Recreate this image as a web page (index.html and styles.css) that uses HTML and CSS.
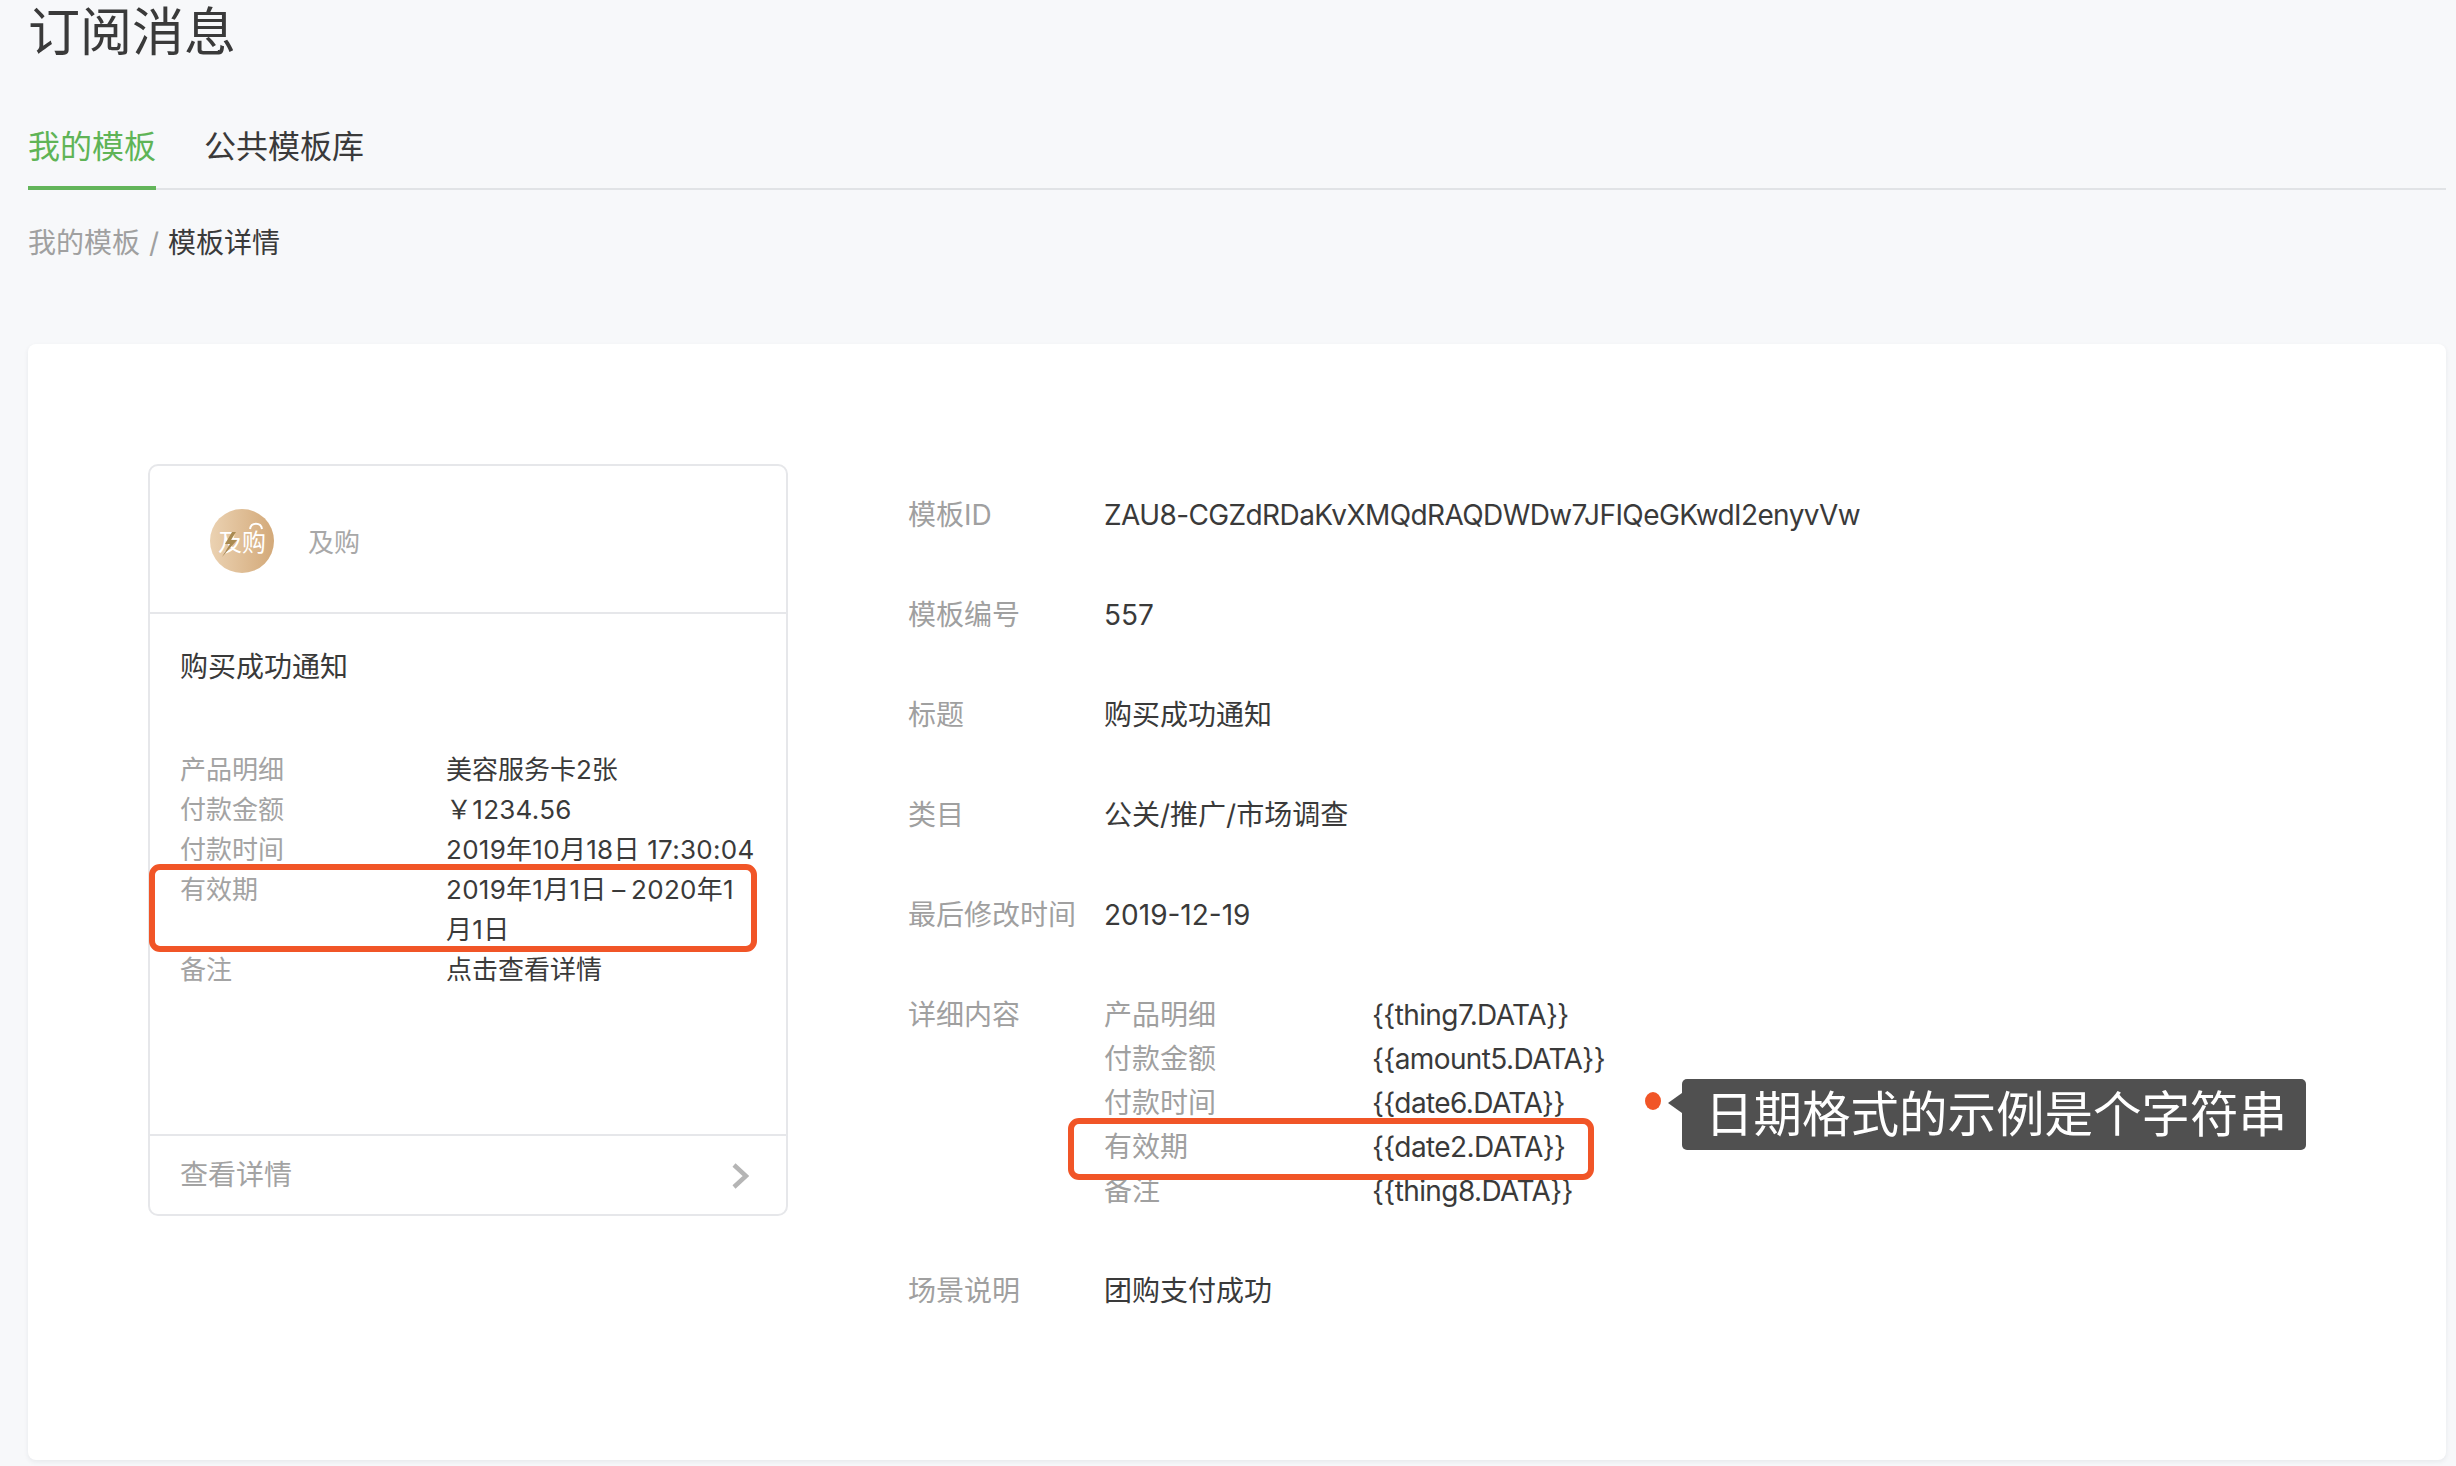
FILE: index.html
```html
<!DOCTYPE html>
<html lang="zh-CN">
<head>
<meta charset="utf-8">
<title>订阅消息</title>
<link rel="stylesheet" href="styles.css">
</head>
<body>
<div class="page">
  <h1 class="title">订阅消息</h1>
  <nav class="tabs">
    <a class="tab tab-active">我的模板</a>
    <a class="tab">公共模板库</a>
  </nav>
  <div class="crumbs"><span class="crumb-link">我的模板</span><span class="crumb-sep">/</span><span class="crumb-current">模板详情</span></div>
  <main class="panel">
    <section class="phone">
      <header class="phone-head">
        <div class="logo">
          <span class="logo-text">及购</span>
          <svg class="logo-art" viewBox="0 0 64 64">
            <path class="logo-handle" d="M40 20c1-7 11-7 12 0"/>
            <path class="logo-bolt" d="M22 23 15 35h5l-8 13L27 31h-6l5-8z"/>
          </svg>
        </div>
        <span class="brand">及购</span>
      </header>
      <div class="phone-body">
        <div class="phone-title">购买成功通知</div>
        <dl class="phone-list">
          <div class="phone-row"><dt>产品明细</dt><dd>美容服务卡2张</dd></div>
          <div class="phone-row"><dt>付款金额</dt><dd class="digits">￥1234.56</dd></div>
          <div class="phone-row"><dt>付款时间</dt><dd class="digits">2019年10月18日 17:30:04</dd></div>
          <div class="phone-row"><dt>有效期</dt><dd class="digits range">2019年1月1日 – 2020年1月1日</dd></div>
          <div class="phone-row"><dt>备注</dt><dd>点击查看详情</dd></div>
        </dl>
        <div class="mark mark-phone"></div>
      </div>
      <footer class="phone-foot">
        <span>查看详情</span>
        <svg class="chevron" viewBox="0 0 18 26"><path d="M3 2l12 11L3 24"/></svg>
      </footer>
    </section>
    <section class="info">
      <div class="info-row"><div class="info-label">模板ID</div><div class="info-value latin">ZAU8-CGZdRDaKvXMQdRAQDWDw7JFIQeGKwdI2enyvVw</div></div>
      <div class="info-row"><div class="info-label">模板编号</div><div class="info-value">557</div></div>
      <div class="info-row"><div class="info-label">标题</div><div class="info-value">购买成功通知</div></div>
      <div class="info-row"><div class="info-label">类目</div><div class="info-value">公关/推广/市场调查</div></div>
      <div class="info-row"><div class="info-label">最后修改时间</div><div class="info-value">2019-12-19</div></div>
      <div class="info-row">
        <div class="info-label">详细内容</div>
        <div class="detail">
          <div class="detail-row"><span class="detail-key">产品明细</span><span class="latin">{{thing7.DATA}}</span></div>
          <div class="detail-row"><span class="detail-key">付款金额</span><span class="latin">{{amount5.DATA}}</span></div>
          <div class="detail-row"><span class="detail-key">付款时间</span><span class="latin">{{date6.DATA}}</span></div>
          <div class="detail-row"><span class="detail-key">有效期</span><span class="latin">{{date2.DATA}}</span></div>
          <div class="detail-row"><span class="detail-key">备注</span><span class="latin">{{thing8.DATA}}</span></div>
          <div class="mark mark-detail"></div>
          <div class="note">
            <span class="note-dot"></span>
            <span class="note-box">日期格式的示例是个字符串</span>
          </div>
        </div>
      </div>
      <div class="info-row"><div class="info-label">场景说明</div><div class="info-value">团购支付成功</div></div>
    </section>
  </main>
</div>
</body>
</html>
```
FILE: styles.css
```css
html, body {
  margin: 0;
  height: 100%;
  overflow: hidden;
  background: #f7f8fa;
}
* { box-sizing: border-box; }
body {
  font-family: Inter, "Noto Sans CJK SC", sans-serif;
  color: #3a3a3a;
}
.page { padding: 0 10px 0 28px; }
.title {
  margin: 0;
  font-size: 52px;
  line-height: 66px;
  font-weight: 400;
}
.tabs {
  display: flex;
  gap: 48px;
  margin-top: 54px;
  border-bottom: 2px solid #e1e3e6;
  height: 70px;
}
.tab {
  font-size: 32px;
  line-height: 54px;
  height: 70px;
}
.tab-active {
  color: #5fb456;
  border-bottom: 4px solid #63b55a;
}
.crumbs {
  margin-top: 33px;
  font-size: 28px;
  line-height: 40px;
  display: flex;
}
.crumb-link { color: #a0a0a0; }
.crumb-sep { color: #a0a0a0; margin: 0 9px; }
.panel {
  display: flex;
  margin-top: 81px;
  height: 1116px;
  padding: 120px 0 0 120px;
  background: #fff;
  border-radius: 8px;
  box-shadow: 0 2px 5px rgba(30, 40, 60, .07);
}
.phone {
  width: 640px;
  height: 752px;
  border: 2px solid #e6e7ea;
  border-radius: 10px;
  display: flex;
  flex-direction: column;
  flex: none;
}
.phone-head {
  height: 148px;
  flex: none;
  display: flex;
  align-items: center;
  padding: 3px 0 0 60px;
  gap: 34px;
  border-bottom: 2px solid #e6e7ea;
}
.logo {
  position: relative;
  width: 64px;
  height: 64px;
  margin-top: 1px;
  border-radius: 50%;
  background: linear-gradient(90deg, #ebd2b2, #d3a979);
  display: flex;
  align-items: center;
  justify-content: center;
}
.logo-text {
  color: #fff;
  font-size: 24px;
  line-height: 24px;
  margin-top: 4px;
}
.logo-art {
  position: absolute;
  left: 0;
  top: 0;
  width: 64px;
  height: 64px;
}
.logo-handle {
  fill: none;
  stroke: #fff;
  stroke-width: 2;
}
.logo-bolt { fill: #a98a52; }
.brand {
  font-size: 26px;
  color: #a8a8a8;
}
.phone-body {
  position: relative;
  flex: 1;
  padding: 0 30px;
}
.phone-title {
  font-size: 28px;
  line-height: 40px;
  margin-top: 33px;
}
.phone-list {
  margin: 63px 0 0;
  font-size: 26px;
  line-height: 40px;
}
.phone-row { display: flex; }
.phone-row dt {
  width: 266px;
  flex: none;
  color: #a3a3a3;
}
.phone-row dd {
  margin: 0;
  flex: 1;
  word-break: break-all;
}
.phone-row .digits { letter-spacing: .28px; }
.phone-row .range { word-spacing: -2px; }
.phone-foot {
  height: 80px;
  flex: none;
  display: flex;
  align-items: center;
  justify-content: space-between;
  padding: 0 37px 4px 30px;
  border-top: 2px solid #e6e7ea;
  font-size: 28px;
  color: #a3a3a3;
}
.chevron {
  width: 18px;
  height: 26px;
  margin-top: 6px;
  fill: none;
  stroke: #b5b5b5;
  stroke-width: 4.5;
}
.mark {
  position: absolute;
  border: 6px solid #f15527;
  border-radius: 11px;
}
.mark-phone {
  left: -1px;
  top: 250px;
  width: 608px;
  height: 88px;
}
.info {
  margin: 29px 0 0 120px;
  font-size: 28px;
  line-height: 44px;
  display: flex;
  flex-direction: column;
  gap: 56px;
}
.info-row { display: flex; }
.info-label {
  width: 196px;
  flex: none;
  color: #a0a0a0;
}
.latin { letter-spacing: -.6px; }
.detail { position: relative; }
.detail-row { display: flex; }
.detail-key {
  width: 268px;
  color: #a0a0a0;
}
.mark-detail {
  left: -36px;
  top: 125px;
  width: 526px;
  height: 62px;
}
.note {
  position: absolute;
  left: 541px;
  top: 86px;
  display: flex;
  align-items: flex-start;
  white-space: nowrap;
}
.note-dot {
  width: 16px;
  height: 18px;
  margin-top: 13px;
  border-radius: 50%;
  background: #f15527;
}
.note-box {
  position: relative;
  margin-left: 21px;
  width: 624px;
  height: 71px;
  padding-left: 23px;
  background: #505050;
  border-radius: 5px;
  color: #fff;
  font-size: 48.5px;
  line-height: 72px;
}
.note-box::before {
  content: "";
  position: absolute;
  left: -14px;
  top: 14px;
  border: 10px solid transparent;
  border-left: 0;
  border-right: 14px solid #505050;
}
```
